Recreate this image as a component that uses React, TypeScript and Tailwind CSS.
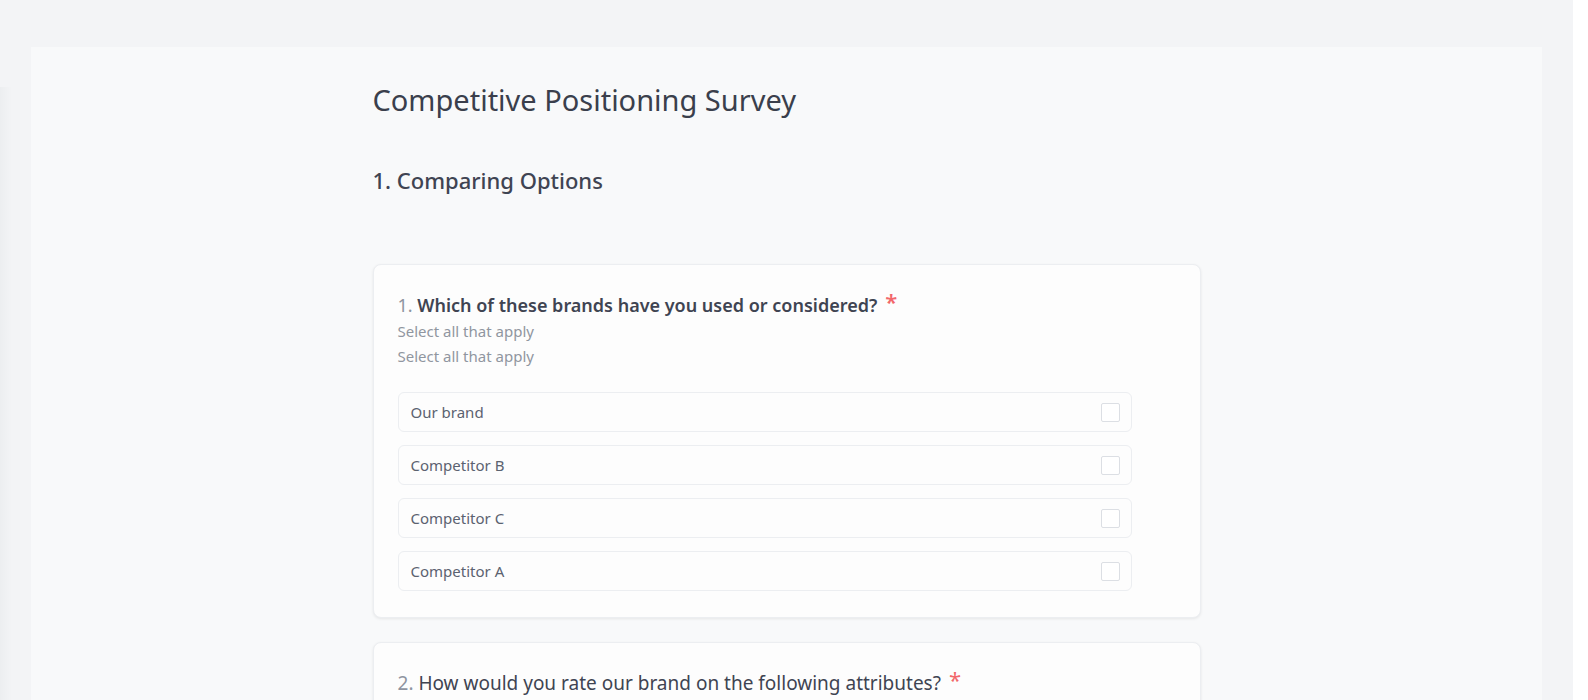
import React from 'react';

const OPTIONS = ['Our brand', 'Competitor B', 'Competitor C', 'Competitor A'];

function Question({
  num,
  title,
  subtitle,
  children,
  weight = 'font-semibold text-[18px]',
}: {
  num: number;
  title: string;
  subtitle?: string[];
  children?: React.ReactNode;
  weight?: string;
}) {
  return (
    <div className="rounded-lg border border-[#eceef1] bg-[#fdfdfd] px-6 pt-[26px] pb-[26px] shadow-[0_1px_3px_rgba(0,0,0,0.08)]">
      <h3 className={`leading-7 text-[#3f4452] ${weight}`}>
        <span className="font-normal text-[#8e94a0]">{num}.</span> {title}
        <span className="ml-2 align-top text-[22px] leading-5 text-[#f2676b]">*</span>
      </h3>
      {subtitle?.map((s, i) => (
        <p key={i} className="text-[15px] leading-[25px] text-[#9096a0]">
          {s}
        </p>
      ))}
      {children}
    </div>
  );
}

export default function App() {
  return (
    <div className="relative flex min-h-[700px] bg-[#f3f4f6] font-['Noto_Sans',sans-serif]">
      <div className="pointer-events-none absolute left-0 top-[87px] h-[620px] w-[12px] bg-gradient-to-r from-[#eceef0] to-transparent" />
      <div className="flex-1 px-[31px] pt-[47px]">
        <div className="min-h-[660px] bg-[#f8f9fa] pb-10">
          <div className="mx-auto w-[828px] pt-[33px]">
            <h1 className="text-[29px] leading-10 font-normal text-[#3a3f4c]">
              Competitive Positioning Survey
            </h1>
            <h2 className="mt-[44px] text-[22px] leading-8 font-medium text-[#3f4452]">
              1. Comparing Options
            </h2>
            <div className="mt-[68px] flex flex-col gap-6">
              <Question
                num={1}
                title="Which of these brands have you used or considered?"
                subtitle={['Select all that apply', 'Select all that apply']}
              >
                <div className="mt-[23px] flex w-[734px] flex-col gap-[13px]">
                  {OPTIONS.map((o) => (
                    <label
                      key={o}
                      className="flex h-10 items-center justify-between rounded-md border border-[#eceef1] bg-[#fdfdfd] pl-3 pr-[11px]"
                    >
                      <span className="text-[15px] text-[#5b6270]">{o}</span>
                      <span className="h-[19px] w-[19px] rounded-[2px] border border-[#dcdfe4] bg-white" />
                    </label>
                  ))}
                </div>
              </Question>
              <Question
                num={2}
                title="How would you rate our brand on the following attributes?"
                weight="font-normal text-[19px]"
              />
            </div>
          </div>
        </div>
      </div>
      <div className="w-[15px] bg-white" />
    </div>
  );
}
